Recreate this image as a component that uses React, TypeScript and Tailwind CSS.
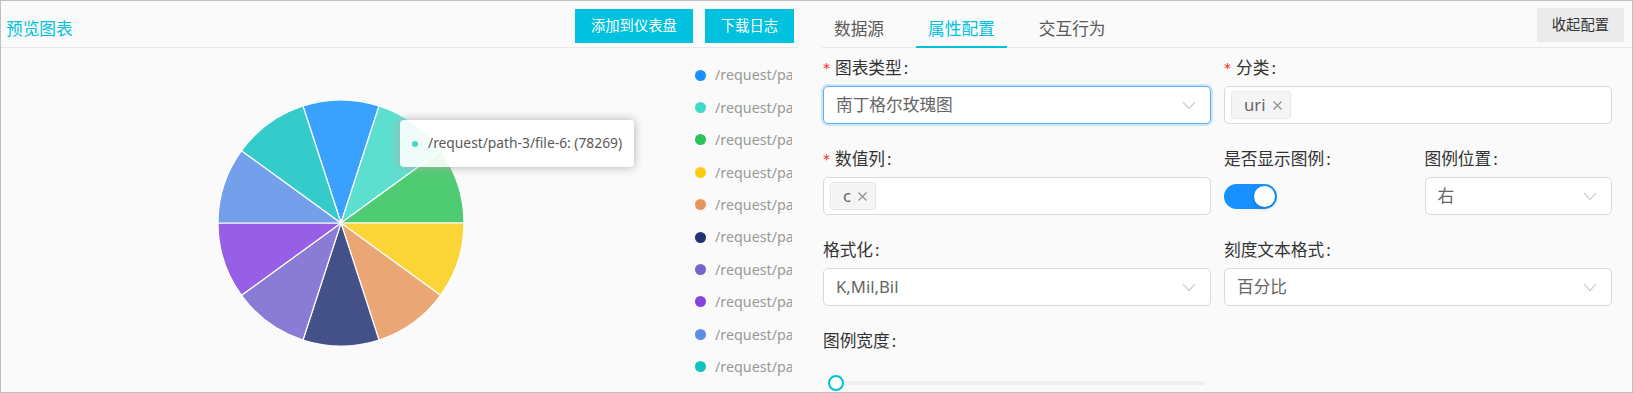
import React from 'react';

const FONT = { fontFamily: '"Noto Sans", "Noto Sans CJK SC", sans-serif' };

const palette = ['#1890ff', '#41d9c7', '#2fc25b', '#facc14', '#e6965c', '#223273', '#7564cc', '#8543e0', '#5c8ee6', '#13c2c2'];

function slicePath(i: number, cx: number, cy: number, r: number) {
  const a0 = ((252 + 36 * i) * Math.PI) / 180;
  const a1 = ((288 + 36 * i) * Math.PI) / 180;
  const x0 = cx + r * Math.cos(a0);
  const y0 = cy + r * Math.sin(a0);
  const x1 = cx + r * Math.cos(a1);
  const y1 = cy + r * Math.sin(a1);
  return `M${cx} ${cy} L${x0.toFixed(2)} ${y0.toFixed(2)} A${r} ${r} 0 0 1 ${x1.toFixed(2)} ${y1.toFixed(2)} Z`;
}

function Chevron() {
  return (
    <svg width="14" height="9" viewBox="0 0 14 9" className="shrink-0">
      <polyline points="1,1 7,7.5 13,1" fill="none" stroke="#bfbfbf" strokeWidth="1.1" />
    </svg>
  );
}

function CloseIcon() {
  return (
    <svg width="9" height="9" viewBox="0 0 9 9" className="shrink-0 ml-[7px]">
      <path d="M0.5 0.5 L8.5 8.5 M8.5 0.5 L0.5 8.5" fill="none" stroke="#8c8c8c" strokeWidth="1.1" />
    </svg>
  );
}

function Label({ text, required }: { text: string; required?: boolean }) {
  return (
    <div className="flex items-center h-[25px] leading-[25px] mb-[6px] text-[16.7px] text-[#333]">
      {required && <span className="text-[#f5222d] text-[14px] w-[12px] leading-none" style={{ fontFamily: '"DejaVu Sans", sans-serif' }}>*</span>}
      <span>{text}</span>
      <span className="ml-[2px]">:</span>
    </div>
  );
}

function Select({ value, focused }: { value: string; focused?: boolean }) {
  return (
    <div
      className={`flex items-center justify-between h-[38px] px-[12px] pr-[14px] rounded-[5px] bg-white border ${
        focused ? 'border-[#5cb0f6] shadow-[0_0_0_2px_rgba(24,144,255,0.2)]' : 'border-[#d9d9d9]'
      }`}
    >
      <span className="text-[16.7px] text-[#666]">{value}</span>
      <Chevron />
    </div>
  );
}

function TagSelect({ tag }: { tag: string }) {
  return (
    <div className="flex items-center h-[38px] pl-[6px] rounded-[5px] bg-white border border-[#d9d9d9]">
      <div className="flex items-center h-[28px] pl-[12px] pr-[8px] bg-[#f5f5f5] border border-[#e8e8e8] rounded-[3px]">
        <span className="text-[16.7px] text-[#666] leading-none">{tag}</span>
        <CloseIcon />
      </div>
    </div>
  );
}

export default function App() {
  const cx = 340;
  const cy = 175;
  const r = 123;

  return (
    <div className="w-[1633px] h-[393px] flex border border-[#bfbfbf] bg-[#fafafa] overflow-hidden" style={FONT}>
      {/* preview panel */}
      <div className="w-[797px] shrink-0 flex flex-col">
        <div className="h-[47px] flex items-start justify-between border-b border-[#e8e8e8] pl-[5px] pr-[4px]">
          <div className="mt-[15px] leading-[25px] text-[16.7px] text-[#00c1de]">预览图表</div>
          <div className="flex gap-[12px] mt-[8px]">
            <button className="h-[34px] px-[16px] bg-[#00c1de] text-white text-[14.3px]">添加到仪表盘</button>
            <button className="h-[34px] px-[16px] bg-[#00c1de] text-white text-[14.3px]">下载日志</button>
          </div>
        </div>
        <div className="relative flex flex-1">
          <svg width="694" height="343" className="shrink-0">
            {palette.map((c, i) => (
              <path key={i} d={slicePath(i, cx, cy, r)} fill={c} fillOpacity={0.85} stroke="#ffffff" strokeWidth={1.2} />
            ))}
          </svg>
          <ul className="pt-[11px] w-[97px] overflow-hidden">
            {palette.map((c, i) => (
              <li key={i} className="flex items-center h-[32.4px] whitespace-nowrap">
                <span className="w-[11px] h-[11px] rounded-full shrink-0" style={{ backgroundColor: c }} />
                <span className="ml-[9px] text-[14.3px] text-[#999]">/request/path-{i + 1}</span>
              </li>
            ))}
          </ul>
          <div className="absolute left-[399px] top-[72px] w-[234px] h-[47px] flex items-center pl-[12px] rounded-[4px] bg-white/90 shadow-[0_0_10px_#aeaeae]">
            <span className="w-[6px] h-[6px] rounded-full bg-[#41d9c7] mr-[10px] shrink-0" />
            <span className="text-[13.8px] text-[#595959] whitespace-nowrap">/request/path-3/file-6: (78269)</span>
          </div>
        </div>
      </div>

      {/* config panel */}
      <div className="flex-1 flex flex-col pl-[24px]">
        <div className="h-[47px] flex items-start border-b border-[#e8e8e8]">
          <div className="flex gap-[20px] h-full">
            <div className="px-[12px] pt-[15px] leading-[25px] text-[16.7px] text-[#595959]">数据源</div>
            <div className="relative px-[12px] pt-[15px] leading-[25px] text-[16.7px] text-[#00c1de]">
              属性配置
              <div className="absolute left-0 right-0 bottom-[-1px] h-[2px] bg-[#00c1de]" />
            </div>
            <div className="px-[12px] pt-[15px] leading-[25px] text-[16.7px] text-[#595959]">交互行为</div>
          </div>
          <button className="ml-auto mr-[8px] mt-[7px] h-[34px] px-[15px] bg-[#ebebeb] text-[#333] text-[14.3px]">收起配置</button>
        </div>

        <div className="grid grid-cols-4 gap-x-[13px] w-[789px] ml-[1px] pt-[7px]">
          <div className="col-span-2 mb-[22px]">
            <Label text="图表类型" required />
            <Select value="南丁格尔玫瑰图" focused />
          </div>
          <div className="col-span-2 mb-[22px]">
            <Label text="分类" required />
            <TagSelect tag="uri" />
          </div>

          <div className="col-span-2 mb-[22px]">
            <Label text="数值列" required />
            <TagSelect tag="c" />
          </div>
          <div className="mb-[22px]">
            <Label text="是否显示图例" />
            <div className="h-[38px] flex items-center">
              <div className="w-[53px] h-[25px] rounded-full bg-[#1890ff] flex items-center justify-end pr-[2px]">
                <div className="w-[21px] h-[21px] rounded-full bg-white shadow-[0_2px_4px_rgba(0,35,11,0.2)]" />
              </div>
            </div>
          </div>
          <div className="mb-[22px]">
            <Label text="图例位置" />
            <Select value="右" />
          </div>

          <div className="col-span-2 mb-[22px]">
            <Label text="格式化" />
            <Select value="K,Mil,Bil" />
          </div>
          <div className="col-span-2 mb-[22px]">
            <Label text="刻度文本格式" />
            <Select value="百分比" />
          </div>

          <div className="col-span-2">
            <Label text="图例宽度" />
            <div className="relative mt-[28px] ml-[5px] mr-[6px] h-[4px] rounded-full bg-[#efefef]">
              <div className="absolute left-0 top-[-6px] w-[16px] h-[16px] rounded-full bg-white border-2 border-[#00c1de]" />
            </div>
          </div>
        </div>
      </div>
    </div>
  );
}
